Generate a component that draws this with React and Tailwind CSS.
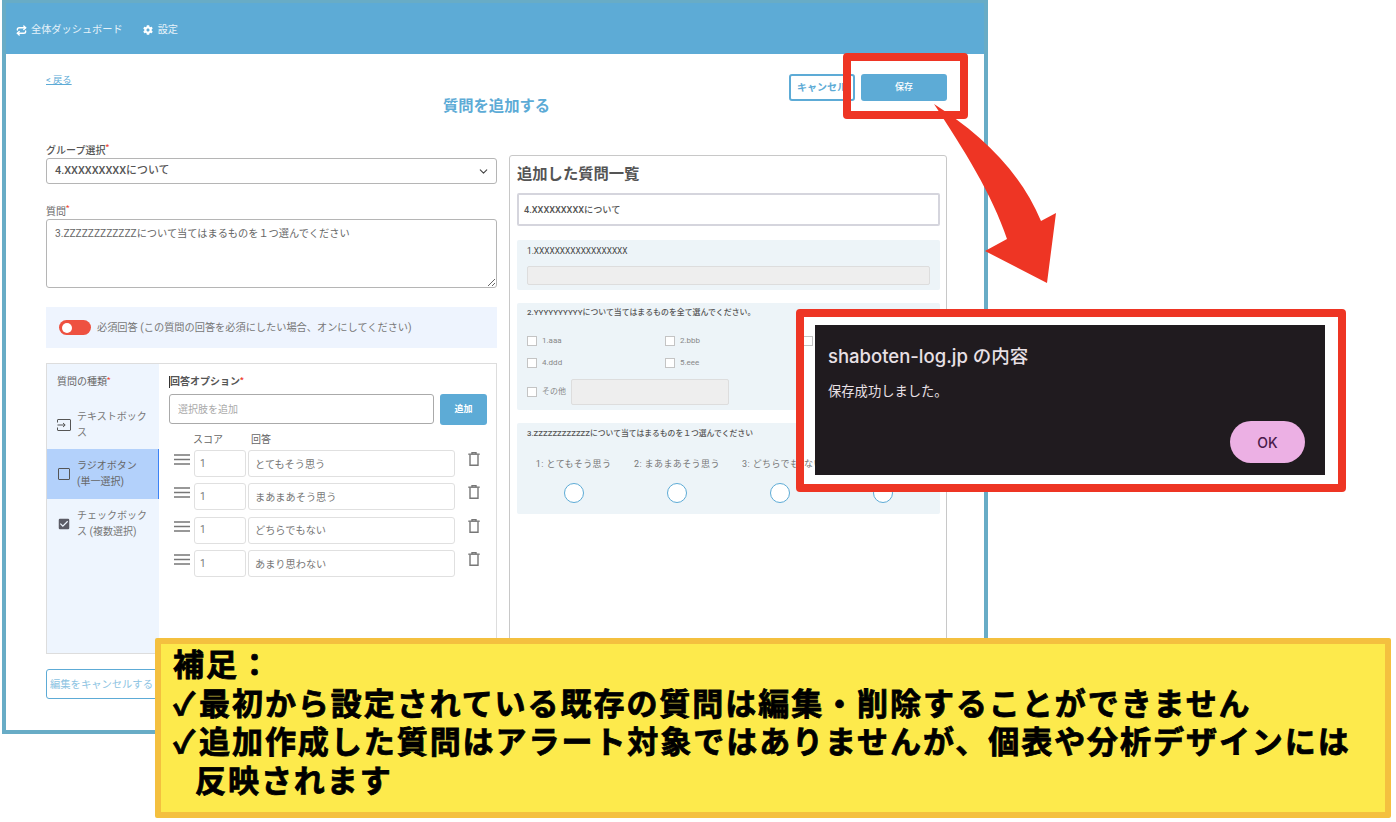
import React from "react";
import { ChevronDown, Repeat } from "lucide-react";
import { FaCog } from "react-icons/fa";
import { MdCheckBox } from "react-icons/md";

const font = "font-['Roboto','Noto_Sans_CJK_JP',sans-serif]";

function Req() {
  return <span className="text-[#ee3524] text-[8px] leading-none align-top">*</span>;
}

function Trash() {
  return (
    <svg width="12" height="14" viewBox="0 0 12 14" fill="none" stroke="#777" strokeWidth="1.4">
      <path d="M0.3 2.2H11.7" />
      <path d="M4 2V0.8H8V2" />
      <path d="M2 3V13.2H10V3" />
    </svg>
  );
}

function Drag() {
  return (
    <svg width="16" height="11" viewBox="0 0 16 11" stroke="#777" strokeWidth="1.4">
      <path d="M0 1H16M0 5.5H16M0 10H16" />
    </svg>
  );
}

function OptionRow({ text }) {
  return (
    <div className="flex items-start h-[27px]">
      <div className="ml-[5px] w-[16px] mt-[4px] flex"><Drag /></div>
      <input readOnly defaultValue="1" className="ml-[4px] w-[52px] h-[27px] border border-[#e0e0e0] rounded-[3px] px-[5px] pb-[1px] text-[10px] text-[#777] outline-none" />
      <input readOnly defaultValue={text} className="ml-[2px] w-[207px] h-[27px] border border-[#e0e0e0] rounded-[3px] px-[6px] pb-[1px] text-[10.2px] text-[#777] outline-none" />
      <div className="ml-[13px] mt-[2px] flex"><Trash /></div>
    </div>
  );
}

function Check({ label }) {
  return (
    <div className="flex items-center gap-[5px] h-[10px]">
      <span className="w-[10px] h-[10px] bg-white border border-[#c4c4c4] shrink-0"></span>
      {label && <span className="text-[8px] text-[#888]">{label}</span>}
    </div>
  );
}

function Radio({ label }) {
  return (
    <div className="flex flex-col items-center">
      <span className="h-[12px] text-[9px] leading-[12px] text-[#777] tracking-[0.4px] whitespace-nowrap">{label}</span>
      <span className="mt-[13px] w-[20px] h-[20px] rounded-full bg-white border-[1.5px] border-[#5dabd6]"></span>
    </div>
  );
}

export default function App() {
  return (
    <div className={`relative w-[1396px] h-[822px] overflow-hidden bg-white ${font}`}>
      <div className="ml-[2px] w-[986px] h-[734px] border-[4px] border-t-[3px] border-[#68acc6] bg-white">
        <header className="h-[51px] pt-[3px] bg-[#5dabd6] flex items-center pl-[10px] text-[10.2px] text-[#e6f2f9]">
          <Repeat size={11} strokeWidth={3} className="text-white" />
          <span className="ml-[4px]">全体ダッシュボード</span>
          <FaCog size={10} className="ml-[20px] text-white" />
          <span className="ml-[5px]">設定</span>
        </header>

        <main className="pl-[40px] pr-[37px]">
          <div className="grid grid-cols-[1fr_auto_1fr] pt-[20px]">
            <div><a className="text-[9.3px] leading-[12px] text-[#5dabd6] underline block">&lt; 戻る</a></div>
            <h1 className="pt-[22px] text-[15.3px] leading-[20px] font-bold text-[#5dabd6]">質問を追加する</h1>
            <div className="flex justify-end gap-[6px]">
              <button className="w-[66px] h-[27px] border-2 border-[#5dabd6] rounded-[3px] text-[10px] font-bold text-[#5dabd6] bg-white whitespace-nowrap overflow-hidden">キャンセル</button>
              <button className="w-[86px] h-[27px] rounded-[3px] text-[9px] font-medium text-white bg-[#5dabd6]">保存</button>
            </div>
          </div>

          <div className="flex gap-[12px] items-start">
            <section className="w-[451px] mt-[27px] flex flex-col">
              <label className="h-[14px] text-[10px] leading-[16px] font-medium text-[#555]">グループ選択<Req /></label>
              <div className="mt-[1px] h-[26px] border border-[#b5b5b5] rounded-[3px] flex items-center justify-between pl-[8px] pr-[6px] text-[10.9px] font-medium text-[#555]">
                <span className="pt-[1px]">4.XXXXXXXXXについて</span>
                <ChevronDown size={13} className="text-[#444]" />
              </div>
              <label className="mt-[20px] h-[14px] text-[10px] leading-[16px] text-[#666]">質問<Req /></label>
              <textarea readOnly defaultValue="3.ZZZZZZZZZZZZについて当てはまるものを１つ選んでください" className="block mt-[1px] h-[69px] border border-[#b5b5b5] rounded-[3px] px-[8px] py-[7px] text-[10.2px] leading-[14px] text-[#666] outline-none"></textarea>

              <div className="mt-[19px] h-[41px] bg-[#eef4fe] flex items-center pl-[13px]">
                <span className="w-[32px] h-[15px] rounded-full bg-[#ee5140] relative shrink-0">
                  <span className="absolute left-[3px] top-[2.5px] w-[10px] h-[10px] rounded-full bg-white"></span>
                </span>
                <span className="ml-[6px] text-[10.2px] text-[#777]">必須回答 (この質問の回答を必須にしたい場合、オンにしてください)</span>
              </div>

              <div className="mt-[15px] h-[291px] border border-[#ddd] flex">
                <aside className="w-[112px] bg-[#eef5fe] shrink-0">
                  <div className="h-[36px] pt-[12px] pl-[10px] text-[10px] leading-[12px] text-[#666]">質問の種類<Req /></div>
                  <div className="h-[49px] flex items-center pl-[10px] gap-[6px]">
                    <svg width="14" height="12" viewBox="0 0 14 12" fill="none" stroke="#555" strokeWidth="1" className="shrink-0">
                      <path d="M0.5 3.5V1C0.5 0.7 0.7 0.5 1 0.5H13C13.3 0.5 13.5 0.7 13.5 1V11C13.5 11.3 13.3 11.5 13 11.5H1C0.7 11.5 0.5 11.3 0.5 11V8.5" />
                      <path d="M0.5 6H8M6 4L8.2 6L6 8" />
                    </svg>
                    <span className="w-[72px] text-[10px] leading-[16px] text-[#777]">テキストボックス</span>
                  </div>
                  <div className="h-[50px] flex items-center pl-[10px] gap-[6px] bg-[#b3d1fb] border-r border-[#3b82f6]">
                    <span className="ml-[1px] mr-[1px] w-[12px] h-[12px] border-[1.5px] border-[#555] rounded-[1px] shrink-0"></span>
                    <span className="w-[72px] text-[10px] leading-[16px] text-[#666]">ラジオボタン (単一選択)</span>
                  </div>
                  <div className="h-[50px] flex items-center pl-[10px] gap-[6px]">
                    <MdCheckBox size={14} className="text-[#5c5c66] shrink-0" />
                    <span className="w-[72px] text-[10px] leading-[16px] text-[#777]">チェックボックス (複数選択)</span>
                  </div>
                </aside>

                <div className="flex-1 pl-[10px] pr-[9px] pt-[12px]">
                  <div className="h-[12px] text-[10px] leading-[12px] font-bold text-[#555] flex items-center">
                    <span className="w-px h-[12px] bg-[#333]"></span>
                    <span>回答オプション<Req /></span>
                  </div>
                  <div className="mt-[6px] flex gap-[6px] items-start">
                    <input readOnly placeholder="選択肢を追加" className="w-[265px] h-[30px] border border-[#aaa] rounded-[3px] px-[8px] text-[10px] placeholder:text-[#aaa] outline-none" />
                    <button className="w-[47px] h-[31px] bg-[#5dabd6] rounded-[3px] text-[9px] font-bold text-white">追加</button>
                  </div>
                  <div className="mt-[7px] h-[14px] flex text-[10px] leading-[16px] text-[#666]">
                    <span className="ml-[24px] w-[58px]">スコア</span>
                    <span>回答</span>
                  </div>
                  <div className="mt-[4px] flex flex-col gap-[6.4px]">
                    <OptionRow text="とてもそう思う" />
                    <OptionRow text="まあまあそう思う" />
                    <OptionRow text="どちらでもない" />
                    <OptionRow text="あまり思わない" />
                  </div>
                </div>
              </div>

              <button className="mt-[15px] w-[118px] h-[30px] border border-[#5dabd6] rounded-[3px] bg-white text-[10.3px] text-[#8cc3e2] text-left pl-[3px] pt-[1px] whitespace-nowrap">編集をキャンセルする</button>
            </section>

            <section className="w-[438px] mt-[39px] h-[545px] border border-[#c8c8c8] rounded-[3px] pl-[7px] pr-[6px] pt-[8px]">
              <h2 className="text-[15.3px] leading-[20px] font-bold text-[#555]">追加した質問一覧</h2>
              <div className="mt-[9px] h-[33px] border-2 border-[#d5d5dd] rounded-[2px] flex items-center pl-[5px] pt-[1px] text-[9.2px] font-medium text-[#555]">4.XXXXXXXXXについて</div>

              <div className="mt-[14px] h-[50px] bg-[#edf4f8] rounded-[2px] px-[10px] pt-[5px]">
                <p className="text-[8.3px] leading-[12px] text-[#444]">1.XXXXXXXXXXXXXXXXXX</p>
                <div className="mt-[9px] h-[19px] bg-[#eeeeee] border border-[#ddd] rounded-[2px]"></div>
              </div>

              <div className="mt-[13px] h-[107px] bg-[#edf4f8] rounded-[2px] px-[10px] pt-[4px]">
                <p className="text-[7.9px] leading-[12px] font-medium text-[#555]">2.YYYYYYYYYYについて当てはまるものを全て選んでください。</p>
                <div className="mt-[17px] grid grid-cols-[138px_138px_1fr] gap-y-[11.5px]">
                  <Check label="1.aaa" />
                  <Check label="2.bbb" />
                  <Check />
                  <Check label="4.ddd" />
                  <Check label="5.eee" />
                  <Check />
                </div>
                <div className="mt-[11.5px] flex items-center gap-[5px]">
                  <span className="w-[10px] h-[10px] bg-white border border-[#c4c4c4] shrink-0"></span>
                  <span className="w-[24px] text-[8px] text-[#888] whitespace-nowrap">その他</span>
                  <div className="w-[158px] h-[26px] bg-[#eeeeee] border border-[#ddd] rounded-[2px]"></div>
                </div>
              </div>

              <div className="mt-[13px] h-[91px] bg-[#edf4f8] rounded-[2px] px-[5px] pt-[5px]">
                <p className="px-[5px] text-[7.8px] leading-[12px] font-medium text-[#555]">3.ZZZZZZZZZZZZについて当てはまるものを１つ選んでください</p>
                <div className="mt-[18px] grid grid-cols-4">
                  <Radio label="1:  とてもそう思う" />
                  <Radio label="2:  まあまあそう思う" />
                  <Radio label="3:  どちらでもない" />
                  <Radio />
                </div>
              </div>
            </section>
          </div>
        </main>
      </div>

      {/* red highlight around save */}
      <div className="absolute left-[843px] top-[53px] w-[125px] h-[66px] border-[8px] border-[#ee3524] rounded-[4px]"></div>

      {/* arrow */}
      <svg className="absolute left-[920px] top-[90px]" width="150" height="200" viewBox="0 0 150 200">
        <path d="M14 14C58 42 100 80 121 131L136 123L127 193L65 161L87 149C72 104 44 60 14 14Z" fill="#ee3524" />
      </svg>

      {/* dialog callout; the two small items are bits of the page seen in its white gutter, under the dark box */}
      <div className="absolute left-[796px] top-[309px] w-[550px] h-[183px] border-[8px] border-[#ee3524] rounded-[4px] bg-white pt-[8px] pl-[11px] pr-[13px]">
        <span className="absolute left-0 top-[19px] w-[9px] h-[10px] border-y border-r border-[#c4c4c4]"></span>
        <span className="absolute left-0 top-[141px] text-[9px] leading-[12px] text-[#777] tracking-[0.4px] whitespace-nowrap">ない</span>
        <div className="relative h-[150px] bg-[#201b1f] px-[13px] pt-[19px] font-['Inter','Noto_Sans_CJK_JP',sans-serif]">
          <p className="text-[18.5px] leading-[24px] font-medium text-[#e8e0e5] whitespace-nowrap">shaboten-log.jp の内容</p>
          <p className="mt-[12px] pt-[1px] text-[13.3px] leading-[20px] text-[#e8e0e5]">保存成功しました。</p>
          <button className="absolute right-[20px] bottom-[12px] w-[75px] h-[42px] rounded-full bg-[#ecb0e4] text-[14px] font-medium text-[#4a1a4a]">OK</button>
        </div>
      </div>

      {/* yellow note */}
      <div className="absolute left-[155px] top-[638px] w-[1236px] h-[180px] border-[6px] border-[#f4c03f] rounded-[2px] bg-[#fdea4c] pl-[12px] font-['Noto_Sans_CJK_JP',sans-serif] font-bold text-black text-[31px] leading-[38.5px] tracking-[1.95px] whitespace-nowrap [-webkit-text-stroke:0.8px_black]">
        <p>補足：</p>
        <p><span className="inline-block w-[26px] tracking-normal">✓</span>最初から設定されている既存の質問は編集・削除することができません</p>
        <p><span className="inline-block w-[26px] tracking-normal">✓</span>追加作成した質問はアラート対象ではありませんが、個表や分析デザインには</p>
        <p className="pl-[22px]">反映されます</p>
      </div>
    </div>
  );
}
